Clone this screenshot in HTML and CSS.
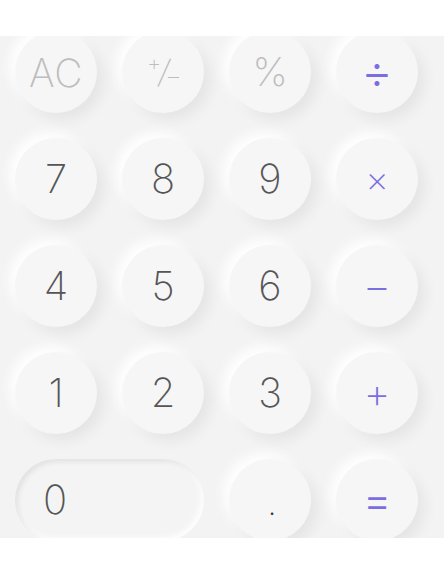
FILE: index.html
```html
<!DOCTYPE html>
<html>
<head>
<meta charset="utf-8">
<link rel="stylesheet" href="styles.css">
</head>
<body>
<div class="pad">
  <div class="keys">
    <div class="key fn ac">AC</div>
    <div class="key fn pm"><span class="pm-plus">+</span><span class="pm-slash">/</span><span class="pm-minus">–</span></div>
    <div class="key fn pct">%</div>
    <div class="key op div">÷</div>

    <div class="key num">7</div>
    <div class="key num">8</div>
    <div class="key num">9</div>
    <div class="key op mul">×</div>

    <div class="key num">4</div>
    <div class="key num">5</div>
    <div class="key num">6</div>
    <div class="key op minus">−</div>

    <div class="key num one">1</div>
    <div class="key num">2</div>
    <div class="key num">3</div>
    <div class="key op plus">+</div>

    <div class="key num zero">0</div>
    <div class="key num dot">.</div>
    <div class="key op eq">=</div>
  </div>
</div>
</body>
</html>
```
FILE: styles.css
```css
html, body {
  margin: 0;
  padding: 0;
  background: #ffffff;
}
body {
  font-family: "Inter", "Open Sans", sans-serif;
}
.pad {
  margin-top: 36px;
  height: 502px;
  background: #f3f3f3;
  overflow: hidden;
}
.keys {
  margin-top: -5px;
  padding-left: 15px;
  display: grid;
  grid-template-columns: repeat(4, 82px);
  grid-auto-rows: 82px;
  gap: 25px;
}
.key {
  border-radius: 41px;
  background: #f6f6f6;
  box-shadow: 7px 7px 14px rgba(0, 0, 0, 0.06), -6px -6px 12px rgba(255, 255, 255, 0.95);
  display: flex;
  align-items: center;
  justify-content: center;
  font-weight: 200;
  font-size: 40px;
  color: #555555;
  line-height: 1;
}
.fn {
  color: #bdbdbd;
}
.ac {
  font-size: 39px;
  letter-spacing: 0.5px;
}
.pm {
  font-size: 28px;
}
.pm-plus {
  font-size: 22px;
  transform: translate(2px, -9px);
}
.pm-slash {
  font-size: 32px;
  transform: skewX(-10deg);
}
.pm-minus {
  font-size: 22px;
  transform: translate(-2px, 4px);
}
.pct {
  font-size: 40px;
}
.op {
  color: #7b6de2;
  font-weight: 200;
}
.div {
  font-size: 48px;
  font-weight: 300;
}
.mul {
  font-size: 36px;
}
.minus {
  font-size: 44px;
}
.plus {
  font-size: 42px;
}
.eq {
  font-size: 44px;
  font-weight: 300;
}
.zero {
  grid-column: span 2;
  justify-content: flex-start;
  padding-left: 28px;
  background: #f4f4f4;
  box-shadow: inset 3px 3px 5px rgba(0, 0, 0, 0.07), inset -3px -3px 6px rgba(255, 255, 255, 0.9);
}
.dot {
  align-items: flex-end;
  padding-bottom: 24px;
  padding-left: 4px;
  box-sizing: border-box;
  color: #333333;
  font-weight: 600;
  font-size: 16px;
}
```
